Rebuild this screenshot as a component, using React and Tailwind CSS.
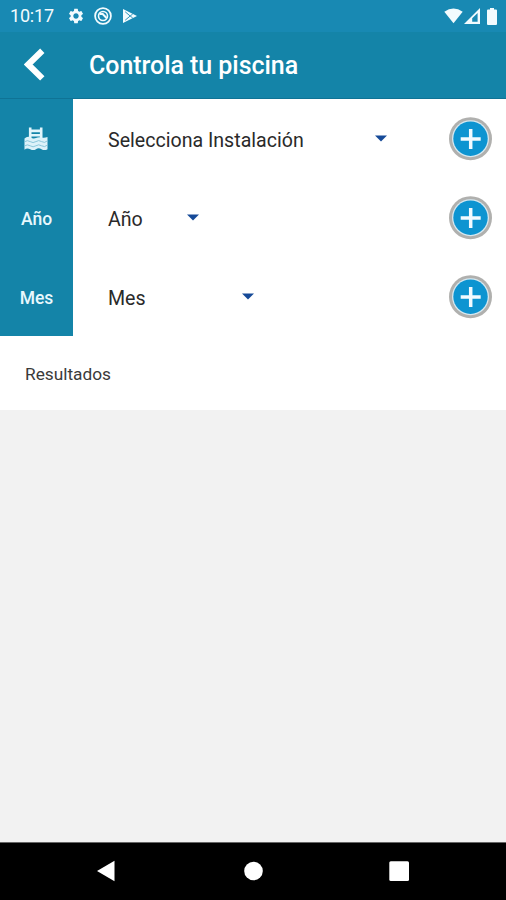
import { MdSettings } from 'react-icons/md';

const rows = [
  { id: 'instalacion', label: null, value: 'Selecciona Instalación', width: 'w-[279px]' },
  { id: 'anio', label: 'Año', value: 'Año', width: 'w-[91px]' },
  { id: 'mes', label: 'Mes', value: 'Mes', width: 'w-[146px]' },
];

function StatusBar() {
  return (
    <div className="h-8 shrink-0 flex items-center pl-[10px] pr-2 bg-[#1889b3] text-[#f2fbfe]">
      <span className="w-[57px] text-[18px] leading-8 tracking-[-0.2px]">10:17</span>
      <MdSettings className="w-[18px] h-[18px]" />
      <svg className="ml-[9px] w-[18px] h-[18px]" viewBox="0 0 18 18" fill="none" stroke="currentColor">
        <circle cx="9" cy="9" r="7.9" strokeWidth="1.8" />
        <circle cx="9" cy="9" r="4.5" strokeWidth="1.6" />
        <path d="M5.5 7h3.2l3.8 4" strokeWidth="2" />
      </svg>
      <svg className="ml-[10px] w-[16px] h-[16px]" viewBox="0 0 16 16">
        <path d="M1 1L15 8L1 15z" fill="currentColor" />
        <path d="M3.2 3.8L8.2 8L3.2 12.2M8.2 8L10.8 5.9M8.2 8L10.8 10.1" fill="none" stroke="#1889b3" strokeWidth="0.9" />
      </svg>
      <svg className="ml-auto mr-px w-[19px] h-[16px]" viewBox="0 0 19 16" fill="currentColor">
        <path d="M0.3 3.8Q9.5-2.8 18.7 3.8L9.5 15.3z" />
      </svg>
      <svg className="w-[16px] h-[16px]" viewBox="0 0 16 16" fill="currentColor">
        <path fillRule="evenodd" d="M0 16L16 0V16zM8.2 10.2V13.8H13.6V5z" />
      </svg>
      <svg className="ml-[7px] mr-px w-[10px] h-[17px]" viewBox="0 0 10 17" fill="currentColor">
        <path d="M3 0h4v1.6h2q1 0 1 1v13.4q0 1-1 1H1q-1 0-1-1V2.6q0-1 1-1h2z" />
      </svg>
    </div>
  );
}

function PoolIcon() {
  return (
    <svg className="-ml-px -mt-[2px] w-6 h-6" viewBox="0 0 24 24" fill="none">
      <path d="M6.2 0.5v12M17.2 0.5v12M6 3.9h11M6 8.2h11" stroke="#e2f5fb" strokeWidth="2.6" />
      <path
        d="M0.5 11.5Q3.5 8.8 6.5 10.5T12 11T17.5 10.5T23.5 10V22.2Q20.5 24 17.5 22.2T12 22.2T6.2 22.2T0.5 22.8z"
        fill="#dcf2f9"
      />
      <path
        d="M0.5 14.8q2.8-2.2 5.7-0.2t5.7 0t5.7 0t5.9-0.8M0.5 19q2.8-2.2 5.7-0.2t5.7 0t5.7 0t5.9-0.8"
        stroke="#80c2d7"
        strokeWidth="0.9"
      />
    </svg>
  );
}

function AddButton() {
  return (
    <button type="button" aria-label="Añadir" className="ml-auto mr-[13px] w-11 h-11">
      <svg className="w-11 h-11" viewBox="0 0 44 44">
        <circle cx="21.5" cy="21.7" r="21.5" fill="#b0b0ae" />
        <circle cx="21.5" cy="21.7" r="18.5" fill="#d6e8f0" />
        <circle cx="21.5" cy="21.7" r="17.2" fill="#0d94d1" />
        <path d="M21.7 12v20M11.7 22h20" stroke="#f2faff" strokeWidth="3.5" />
      </svg>
    </button>
  );
}

function NavBar() {
  return (
    <div className="h-[58px] shrink-0 bg-black border-t border-[#666]">
      <svg className="w-full h-[57px]" viewBox="0 0 506 57" fill="#fff">
        <path d="M97 28L114.5 17.7V38.3z" />
        <circle cx="253.5" cy="28" r="9.3" />
        <rect x="389.3" y="18.3" width="19.7" height="19.7" rx="1.5" />
      </svg>
    </div>
  );
}

export default function App() {
  return (
    <div className="w-full h-screen flex flex-col overflow-hidden bg-[#f2f2f2] font-['Roboto',sans-serif]">
      <StatusBar />

      <header className="h-[67px] shrink-0 flex items-center bg-[#1484a8] border-b border-[#0f7395] text-white">
        <button type="button" aria-label="Volver" className="ml-6 w-[65px]">
          <svg className="w-[21px] h-[34px]" viewBox="0 0 21 34" fill="none" stroke="currentColor">
            <path d="M18.3 2.8L4.2 16.5L18.3 30.4" strokeWidth="6.2" />
          </svg>
        </button>
        <h1 className="pt-[2px] text-[25px] font-medium tracking-[-0.05px] whitespace-nowrap">Controla tu piscina</h1>
      </header>

      <main className="shrink-0 bg-white">
        {rows.map((row) => (
          <div key={row.id} className="h-[79px] flex items-center">
            <div className="w-[73px] h-full shrink-0 flex items-center justify-center pt-[3px] bg-[#1484a8] text-[17.5px] font-medium text-[#e8f8fd]">
              {row.label || <PoolIcon />}
            </div>
            <div className={`ml-[35px] flex items-center justify-between text-[19.6px] text-[#2a2a2a] ${row.width}`}>
              <span className="pt-[4px] whitespace-nowrap">{row.value}</span>
              <svg className="w-3 h-[7px]" viewBox="0 0 12 7">
                <path d="M0 0.5h12L6 6.5z" fill="#164a98" />
              </svg>
            </div>
            <AddButton />
          </div>
        ))}
        <div className="h-[74px] flex items-center pt-[3px] pl-[25px] text-[17.3px] text-[#3a3a3a]">Resultados</div>
      </main>

      <div className="flex-1" />
      <NavBar />
    </div>
  );
}
